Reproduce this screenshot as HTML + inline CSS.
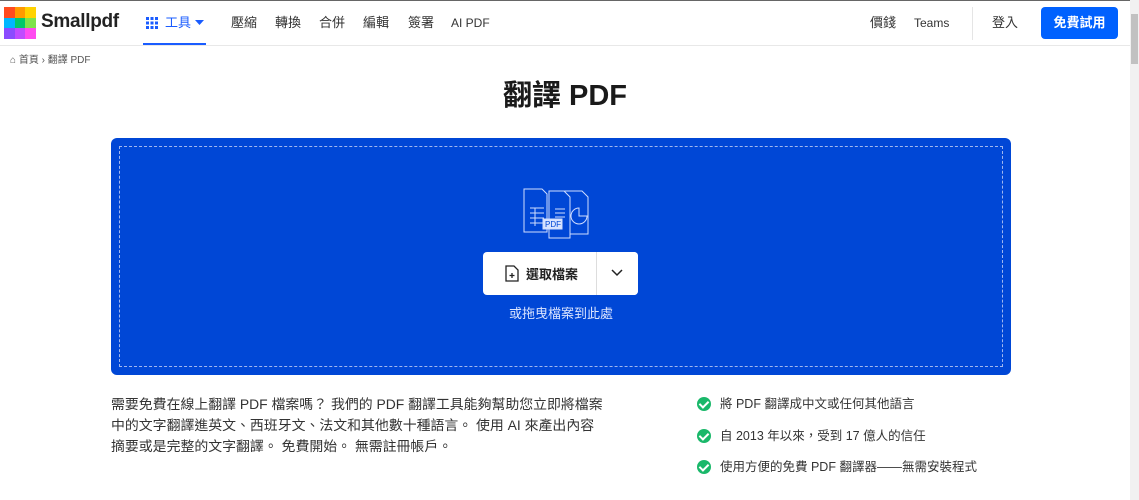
<!DOCTYPE html>
<html><head><meta charset="utf-8"><style>
*{margin:0;padding:0;box-sizing:border-box}
body{width:1139px;height:500px;overflow:hidden;background:#fff;font-family:"Liberation Sans","Noto Sans CJK TC",sans-serif;color:#222;position:relative}
.top{position:absolute;top:0;left:0;right:0;height:1px;background:#666}
.nav{position:absolute;top:1px;left:0;width:1130px;height:45px;border-bottom:1px solid #e8e8e8}
.nav span{position:absolute;top:12px;line-height:20px;font-size:13px;color:#333}
.sb{position:absolute;right:0;top:0;width:9px;height:500px;background:#f1f1f1}
.sb i{position:absolute;left:1px;top:14px;width:7px;height:50px;background:#c1c1c1}
.crumb{position:absolute;top:54px;left:10px;font-size:10px;line-height:14px;color:#555}
h1{position:absolute;top:76px;width:1130px;text-align:center;font-size:29px;line-height:40px;font-weight:bold;color:#1a1a1a}
.drop{position:absolute;left:111px;top:138px;width:900px;height:237px;background:#0047d6;border-radius:6px}
.dash{position:absolute;left:8px;top:8px;right:8px;bottom:8px;border:1px dashed #9fb7f0}
.btn{position:absolute;left:372px;top:114px;width:155px;height:43px;background:#fff;border-radius:4px}
.p{position:absolute;left:111px;top:394px;font-size:13.9px;line-height:21px;color:#333;width:520px}
.li{position:absolute;left:697px;font-size:12.5px;line-height:16px;color:#333}
.li b{display:inline-block;width:14px;height:14px;border-radius:50%;background:#1ab86a;vertical-align:-3px;margin-right:9px;position:relative}
.li b:after{content:"";position:absolute;left:4px;top:2px;width:4px;height:7px;border:solid #fff;border-width:0 2px 2px 0;transform:rotate(45deg)}
</style></head><body>
<div class="top"></div>
<div class="nav">
 <svg style="position:absolute;left:4px;top:6px" width="32" height="32"><rect x="0" y="0" width="11" height="11" fill="#ff4b1f"/><rect x="11" y="0" width="10" height="11" fill="#ff9a00"/><rect x="21" y="0" width="11" height="11" fill="#ffd200"/><rect x="0" y="11" width="11" height="10" fill="#00b7ff"/><rect x="11" y="11" width="10" height="10" fill="#00c86b"/><rect x="21" y="11" width="11" height="10" fill="#7ee34c"/><rect x="0" y="21" width="11" height="11" fill="#8b4bff"/><rect x="11" y="21" width="10" height="11" fill="#c04bff"/><rect x="21" y="21" width="11" height="11" fill="#ff4bf0"/></svg>
 <span style="left:41px;top:9px;line-height:24px;font-size:19px;font-weight:bold;color:#222;letter-spacing:-0.3px">Smallpdf</span>
 <svg style="position:absolute;left:146px;top:16px" width="12" height="12" fill="#1a5cff"><rect x="0" y="0" width="3" height="3"/><rect x="4.5" y="0" width="3" height="3"/><rect x="9" y="0" width="3" height="3"/><rect x="0" y="4.5" width="3" height="3"/><rect x="4.5" y="4.5" width="3" height="3"/><rect x="9" y="4.5" width="3" height="3"/><rect x="0" y="9" width="3" height="3"/><rect x="4.5" y="9" width="3" height="3"/><rect x="9" y="9" width="3" height="3"/></svg>
 <span style="left:165px;color:#1a5cff">工具</span>
 <svg style="position:absolute;left:195px;top:19px" width="9" height="5" fill="#1a5cff"><path d="M0 0h9L4.5 5z"/></svg>
 <div style="position:absolute;left:143px;top:42px;width:63px;height:2px;background:#1a5cff"></div>
 <span style="left:231px">壓縮</span><span style="left:275px">轉換</span><span style="left:319px">合併</span><span style="left:363px">編輯</span><span style="left:408px">簽署</span><span style="left:451px;font-size:12px">AI PDF</span>
 <span style="left:870px">價錢</span><span style="left:914px;font-size:12px">Teams</span>
 <div style="position:absolute;left:972px;top:6px;width:1px;height:33px;background:#e5e5e5"></div>
 <span style="left:992px">登入</span>
 <div style="position:absolute;left:1041px;top:6px;width:77px;height:32px;background:#0061fe;border-radius:4px;color:#fff;font-size:13px;font-weight:bold;text-align:center;line-height:32px">免費試用</div>
</div>
<div class="sb"><i></i></div>
<div class="crumb">⌂ 首頁 › 翻譯 PDF</div>
<h1>翻譯 PDF</h1>
<div class="drop"><div class="dash"></div>
 <svg style="position:absolute;left:412px;top:50px" width="76" height="52" fill="none" stroke="#cfdcff" stroke-width="1"><path d="M1 1h18l5 5v38H1z"/><path d="M7 20h14M7 25h14M7 30h14M7 35h14M12 20v18"/><path d="M42 3h17l6 6v37H42z"/><path d="M56 20a8 8 0 1 0 8 8h-8z"/><path d="M26 3h15l6 6v41H26z" fill="#0047d6"/><path d="M32 21h10M32 25h10M32 29h10"/><rect x="20" y="31" width="19" height="10" fill="#d8e3ff"/><text x="22" y="39" font-size="8" fill="#0047d6" stroke="none" font-family="Liberation Sans">PDF</text></svg>
 <div class="btn">
  <svg style="position:absolute;left:22px;top:13px" width="14" height="17" fill="none" stroke="#222" stroke-width="1.3"><path d="M1 1h8l4 4v11H1z"/><path d="M7 8v5M4.5 10.5h5"/></svg>
  <span style="position:absolute;left:43px;top:12px;font-size:13px;font-weight:bold;color:#222">選取檔案</span>
  <div style="position:absolute;left:113px;top:0;width:1px;height:43px;background:#ddd"></div>
 </div>
 <div style="position:absolute;left:486px;top:114px;width:41px;height:43px;background:#fff;border-radius:0 4px 4px 0"><svg style="position:absolute;left:14px;top:17px" width="12" height="8" fill="none" stroke="#222" stroke-width="1.5"><path d="M1 1l5 5 5-5"/></svg></div>
 <div style="position:absolute;left:0;width:900px;top:165px;text-align:center;color:#dbe5ff;font-size:13px">或拖曳檔案到此處</div>
</div>
<div class="p">需要免費在線上翻譯 PDF 檔案嗎？ 我們的 PDF 翻譯工具能夠幫助您立即將檔案<br>中的文字翻譯進英文、西班牙文、法文和其他數十種語言。 使用 AI 來產出內容<br>摘要或是完整的文字翻譯。 免費開始。 無需註冊帳戶。</div>
<div class="li" style="top:396px"><b></b>將 PDF 翻譯成中文或任何其他語言</div>
<div class="li" style="top:428px"><b></b>自 2013 年以來，受到 17 億人的信任</div>
<div class="li" style="top:459px"><b></b>使用方便的免費 PDF 翻譯器——無需安裝程式</div>
</body></html>
